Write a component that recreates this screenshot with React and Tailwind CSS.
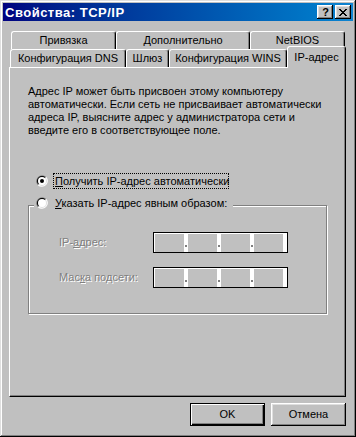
import React from "react";

const font = { fontFamily: '"Liberation Sans", Arial, sans-serif' };

const Radio = ({ checked }) => (
  <svg width="12" height="12" viewBox="0 0 12 12" className="shrink-0">
    <path d="M1.76 10.24A6 6 0 0 1 10.24 1.76Z" fill="#808080" />
    <path d="M10.24 1.76A6 6 0 0 1 1.76 10.24Z" fill="#ffffff" />
    <path d="M2.46 9.54A5 5 0 0 1 9.54 2.46Z" fill="#000000" />
    <path d="M9.54 2.46A5 5 0 0 1 2.46 9.54Z" fill="#dfdfdf" />
    <circle cx="6" cy="6" r="4" fill="#ffffff" />
    {checked && <circle cx="6" cy="6" r="2" fill="#000000" />}
  </svg>
);

const tabBase =
  "h-[18px] flex items-center justify-center border-t border-l border-white border-r border-r-black rounded-t-[3px] shadow-[inset_-1px_0_#808080] bg-[#c0c0c0] text-black";

const IpField = () => (
  <div className="w-[135px] h-[21px] border border-black bg-white flex pt-[1px] pl-[1px]">
    <div className="w-[29px] h-[18px] bg-[#c0c0c0]" />
    <div className="w-[4px] h-[18px] flex flex-col justify-end items-center pb-[5px]">
      <div className="w-[2px] h-[2px] bg-[#808080]" />
    </div>
    <div className="w-[29px] h-[18px] bg-[#c0c0c0]" />
    <div className="w-[4px] h-[18px] flex flex-col justify-end items-center pb-[5px]">
      <div className="w-[2px] h-[2px] bg-[#808080]" />
    </div>
    <div className="w-[29px] h-[18px] bg-[#c0c0c0]" />
    <div className="w-[4px] h-[18px] flex flex-col justify-end items-center pb-[5px]">
      <div className="w-[2px] h-[2px] bg-[#808080]" />
    </div>
    <div className="w-[29px] h-[18px] bg-[#c0c0c0]" />
  </div>
);

export default function App() {
  return (
    <div
      style={font}
      className="w-[356px] h-[437px] bg-[#c0c0c0] p-[3px] text-[11px] leading-[13px] text-black shadow-[inset_-1px_-1px_#000000,inset_1px_1px_#dfdfdf,inset_-2px_-2px_#808080,inset_2px_2px_#ffffff] flex flex-col"
    >
      {/* Title bar */}
      <div className="h-[18px] bg-gradient-to-r from-[#000080] to-[#1084d0] flex items-center justify-between pl-[2px] pr-[2px]">
        <span className="text-white font-bold text-[13px] leading-[15px] tracking-[0.5px]">Свойства: TCP/IP</span>
        <div className="flex gap-[2px]">
          <div className="w-[16px] h-[14px] bg-[#c0c0c0] shadow-[inset_-1px_-1px_#000000,inset_1px_1px_#ffffff,inset_-2px_-2px_#808080,inset_2px_2px_#dfdfdf] flex items-center justify-center">
            <span className="font-bold text-[11px] leading-[11px] text-black pl-[1px]">?</span>
          </div>
          <div className="w-[16px] h-[14px] bg-[#c0c0c0] shadow-[inset_-1px_-1px_#000000,inset_1px_1px_#ffffff,inset_-2px_-2px_#808080,inset_2px_2px_#dfdfdf] flex items-center justify-center">
            <svg width="8" height="7" viewBox="0 0 8 7" shapeRendering="crispEdges">
              <path
                d="M0 0h2v1h-2zM6 0h2v1h-2zM1 1h2v1h-2zM5 1h2v1h-2zM2 2h4v1h-4zM3 3h2v1h-2zM2 4h4v1h-4zM1 5h2v1h-2zM5 5h2v1h-2zM0 6h2v1h-2zM6 6h2v1h-2z"
                fill="#000"
              />
            </svg>
          </div>
        </div>
      </div>

      {/* Body */}
      <div className="pl-[6px] pr-[7px] flex flex-col">
        {/* Tabs */}
        <div className="mt-[10px] flex flex-col">
          <div className="flex ml-[2px]">
            <div className={tabBase + " w-[105px]"}>Привязка</div>
            <div className={tabBase + " w-[134px]"}>Дополнительно</div>
            <div className={tabBase + " w-[95px]"}>NetBIOS</div>
          </div>
          <div className="flex ml-[1px] h-[18px] items-end">
            <div className={tabBase + " w-[116px]"}>Конфигурация DNS</div>
            <div className={tabBase + " w-[43px]"}>Шлюз</div>
            <div className={tabBase + " w-[118px]"}>Конфигурация WINS</div>
            <div className="w-[59px] h-[22px] -mb-[1px] relative z-10 flex items-center justify-center border-t border-l border-white border-r border-r-black rounded-t-[3px] shadow-[inset_-1px_0_#808080] bg-[#c0c0c0] pb-[1px]">
              IP-адрес
            </div>
          </div>
        </div>

        {/* Panel */}
        <div className="h-[330px] border-t border-l border-white border-r border-b border-r-black border-b-black shadow-[inset_-1px_-1px_#808080] flex flex-col">
          <p className="ml-[18px] mt-[17px]">
            Адрес IP может быть присвоен этому компьютеру
            <br />
            автоматически. Если сеть не присваивает автоматически
            <br />
            адреса IP, выясните адрес у администратора сети и
            <br />
            введите его в соответствующее поле.
          </p>

          <div className="mt-[36px] ml-[26px] h-[16px] flex items-center">
            <Radio checked />
            <div className="ml-[5px] h-[16px] w-[176px] border border-dotted border-black px-[1px] flex items-center whitespace-nowrap">
              <span>
                <span className="underline">П</span>олучить IP-адрес автоматически
              </span>
            </div>
          </div>

          <div className="mt-[16px] ml-[18px] w-[299px] h-[109px] border border-[#808080] shadow-[inset_1px_1px_#ffffff,1px_1px_#ffffff] relative flex flex-col">
            <div className="absolute left-[5px] -top-[11px] h-[16px] bg-[#c0c0c0] flex items-center pl-[2px] pr-[6px] whitespace-nowrap">
              <Radio />
              <span className="ml-[7px]">
                <span className="underline">У</span>казать IP-адрес явным образом:
              </span>
            </div>

            <div className="mt-[26px] ml-[30px] flex items-center">
              <div className="w-[94px] text-[#808080] [text-shadow:1px_1px_0_#ffffff]">
                IP-<span className="underline">а</span>дрес:
              </div>
              <IpField />
            </div>
            <div className="mt-[14px] ml-[30px] flex items-center">
              <div className="w-[94px] text-[#808080] [text-shadow:1px_1px_0_#ffffff]">
                Мас<span className="underline">к</span>а подсети:
              </div>
              <IpField />
            </div>
          </div>
        </div>

        {/* Buttons */}
        <div className="mt-[6px] flex justify-end gap-[6px]">
          <div className="w-[75px] h-[23px] border border-black shadow-[inset_1px_1px_#ffffff,inset_-1px_-1px_#000000,inset_-2px_-2px_#808080] flex items-center justify-center">
            OK
          </div>
          <div className="w-[75px] h-[23px] shadow-[inset_-1px_-1px_#000000,inset_1px_1px_#ffffff,inset_-2px_-2px_#808080,inset_2px_2px_#dfdfdf] flex items-center justify-center">
            Отмена
          </div>
        </div>
      </div>
    </div>
  );
}
